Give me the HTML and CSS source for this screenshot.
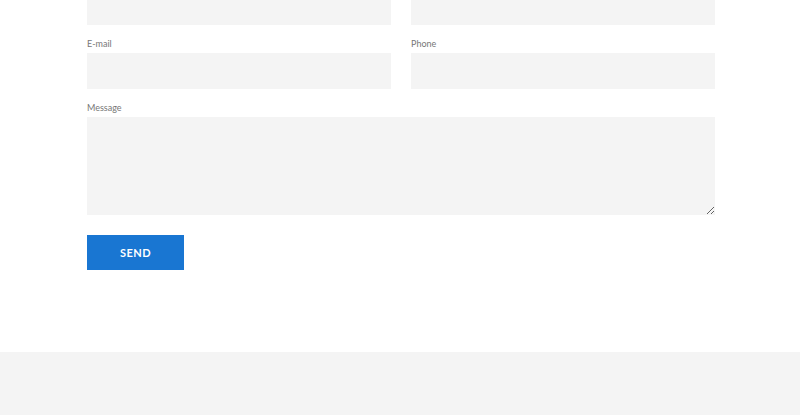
FILE: index.html
```html
<!DOCTYPE html>
<html lang="en">
<head>
  <meta charset="UTF-8" />
  <meta name="viewport" content="width=device-width, initial-scale=1.0"/>
  <title>Contact</title>
  <link rel="stylesheet" href="styles.css">
</head>
<body>
  <section class="contact">
    <form class="contact-form">
      <div class="row">
        <div class="field">
          <label>Name</label>
          <input type="text">
        </div>
        <div class="field">
          <label>Company</label>
          <input type="text">
        </div>
      </div>
      <div class="row">
        <div class="field">
          <label>E-mail</label>
          <input type="email">
        </div>
        <div class="field">
          <label>Phone</label>
          <input type="tel">
        </div>
      </div>
      <div class="field">
        <label>Message</label>
        <textarea></textarea>
      </div>
      <button type="button" class="send">SEND</button>
    </form>
  </section>
  <footer class="footer"></footer>
</body>
</html>
```

FILE: styles.css
```css
body {
  margin: 0;
  padding: 0;
  font-family: Lato, "Liberation Sans", sans-serif;
  background: #fff;
  color: #555;
}
.contact {
  display: flow-root;
  padding: 0 85px 82px 87px;
}
.contact-form {
  width: 628px;
  margin-top: -26px;
  display: flex;
  flex-direction: column;
  gap: 13px;
}
.row {
  display: grid;
  grid-template-columns: 1fr 1fr;
  gap: 20px;
}
.field label {
  display: block;
  font-size: 9px;
  line-height: 12px;
  margin-bottom: 3px;
  color: #777;
}
.field input,
.field textarea {
  display: block;
  width: 100%;
  box-sizing: border-box;
  border: none;
  background: #f4f4f4;
  height: 36px;
  margin: 0;
  padding: 0 10px;
  outline: none;
}
.field textarea {
  height: 98px;
  resize: vertical;
}
.send {
  margin-top: 7px;
  width: 97px;
  height: 35px;
  border: none;
  background: #1976d2;
  color: #fff;
  font-family: Lato, "Liberation Sans", sans-serif;
  font-weight: bold;
  font-size: 11px;
  letter-spacing: 0.5px;
  cursor: pointer;
}
.footer {
  background: #f4f4f4;
  height: 63px;
}
```
